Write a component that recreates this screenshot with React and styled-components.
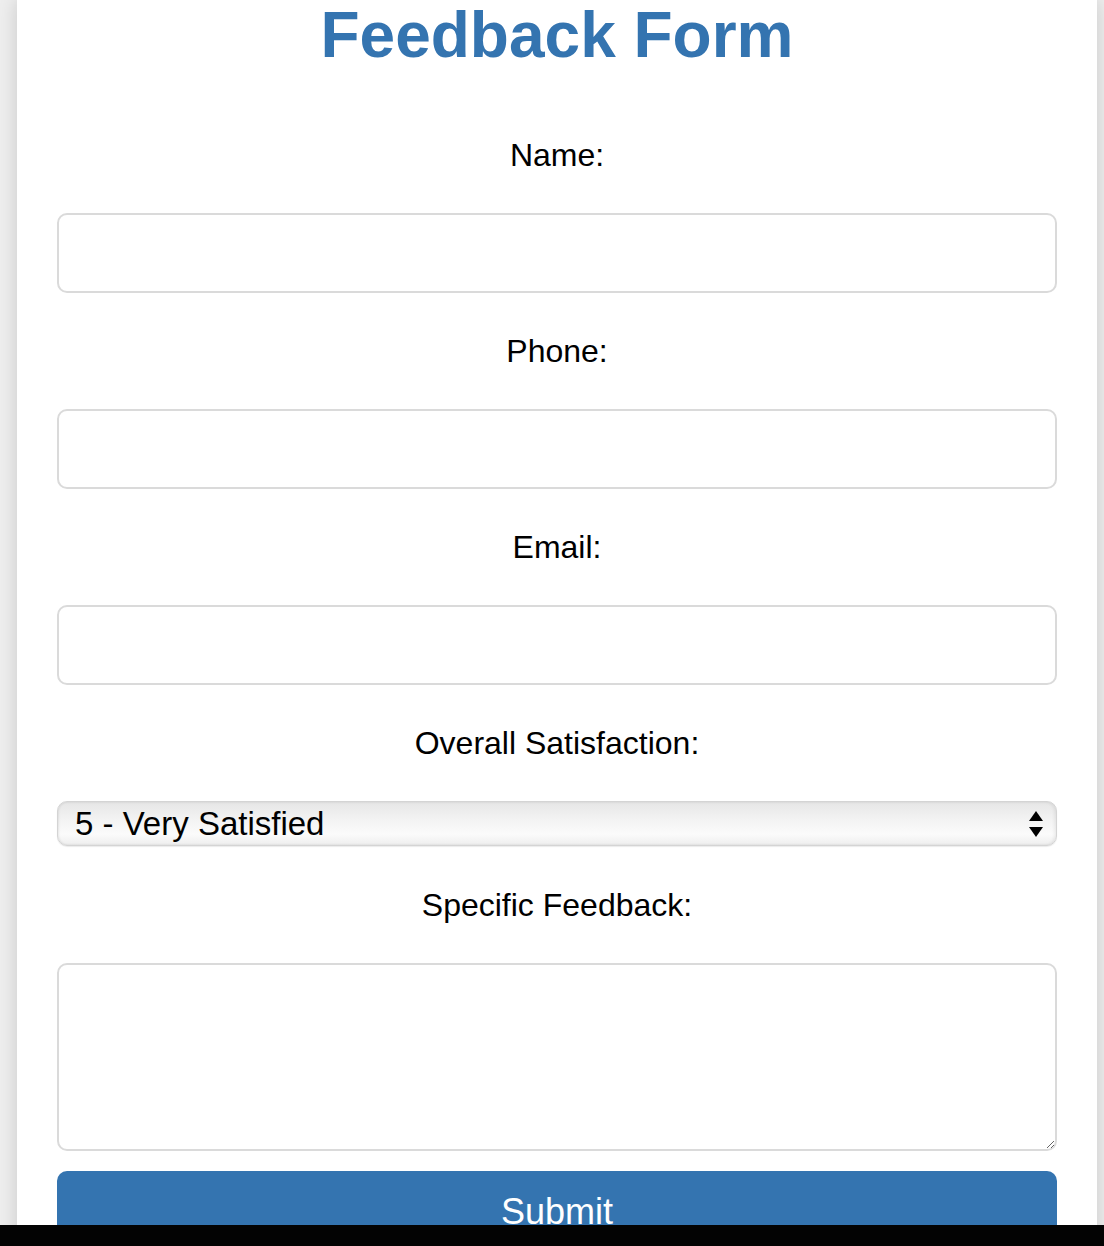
import React from "react";
import styled, { createGlobalStyle } from "styled-components";

const Global = createGlobalStyle`
  html, body { margin: 0; padding: 0; }
  body {
    background: #eeeeee;
    font-family: "Liberation Sans", Arial, sans-serif;
  }
  * { box-sizing: border-box; }
`;

const Page = styled.div`
  height: 100vh;
  overflow: hidden;
  padding-left: 17px;
`;

const Card = styled.main`
  width: 1080px;
  background: #ffffff;
  padding: 3px 40px 40px;
  box-shadow: 0 0 18px rgba(0, 0, 0, 0.16);
  min-height: 1300px;
`;

const Title = styled.h1`
  margin: 0 0 70px;
  text-align: center;
  font-family: "Liberation Sans", Arial, sans-serif;
  font-weight: 700;
  font-size: 64px;
  line-height: 64px;
  color: #3474b0;
`;

const Form = styled.form`
  display: flex;
  flex-direction: column;
`;

const Label = styled.label`
  display: block;
  text-align: center;
  font-size: 32px;
  line-height: 36px;
  color: #000;
  margin-bottom: 40px;
`;

const Input = styled.input`
  display: block;
  width: 100%;
  height: 80px;
  border: 2px solid #dadada;
  border-radius: 10px;
  background: #fff;
  margin-bottom: 40px;
  font-size: 32px;
  padding: 0 16px;
  outline: none;
`;

const SelectWrap = styled.div`
  position: relative;
  margin-bottom: 41px;
`;

const Select = styled.select`
  appearance: none;
  -webkit-appearance: none;
  display: block;
  width: 100%;
  height: 45px;
  border: 1px solid #d4d4d4;
  border-radius: 10px;
  background: linear-gradient(#e6e6e6 0%, #f4f4f4 45%, #fbfbfb 75%, #eeeeee 100%);
  box-shadow: inset 1px 0 2px rgba(0, 0, 0, 0.08), inset -2px 0 3px rgba(0, 0, 0, 0.06),
    0 1px 1px rgba(0, 0, 0, 0.08);
  font-family: "Liberation Sans", Arial, sans-serif;
  font-size: 33px;
  color: #000;
  padding: 0 50px 0 17px;
  outline: none;
`;

const Arrows = styled.svg`
  position: absolute;
  right: 13px;
  top: 10px;
  pointer-events: none;
`;

const TextArea = styled.textarea`
  display: block;
  width: 100%;
  height: 188px;
  border: 2px solid #dadada;
  border-radius: 10px;
  margin-bottom: 20px;
  font-size: 32px;
  padding: 12px 16px;
  outline: none;
`;

const Button = styled.button`
  display: block;
  width: 100%;
  border: none;
  border-radius: 10px;
  background: #3474b0;
  color: #fff;
  font-family: "Liberation Sans", Arial, sans-serif;
  font-size: 36px;
  line-height: 41px;
  padding: 20px 0;
  cursor: pointer;
`;

const BottomBar = styled.div`
  position: fixed;
  left: 0;
  right: 0;
  bottom: 0;
  height: 21px;
  background: #030303;
`;

export default function App() {
  return (
    <>
      <Global />
      <Page>
        <Card>
          <Title>Feedback Form</Title>
          <Form onSubmit={(e) => e.preventDefault()}>
            <Label htmlFor="name">Name:</Label>
            <Input id="name" type="text" />
            <Label htmlFor="phone">Phone:</Label>
            <Input id="phone" type="tel" />
            <Label htmlFor="email">Email:</Label>
            <Input id="email" type="email" />
            <Label htmlFor="sat">Overall Satisfaction:</Label>
            <SelectWrap>
              <Select id="sat" defaultValue="5">
                <option value="5">5 - Very Satisfied</option>
                <option value="4">4 - Satisfied</option>
                <option value="3">3 - Neutral</option>
                <option value="2">2 - Dissatisfied</option>
                <option value="1">1 - Very Dissatisfied</option>
              </Select>
              <Arrows width="16" height="26" viewBox="0 0 16 26">
                <polygon points="8,0 15,10 1,10" fill="#000" />
                <polygon points="1,16 15,16 8,26" fill="#000" />
              </Arrows>
            </SelectWrap>
            <Label htmlFor="fb">Specific Feedback:</Label>
            <TextArea id="fb" />
            <Button type="submit">Submit</Button>
          </Form>
        </Card>
      </Page>
      <BottomBar />
    </>
  );
}
